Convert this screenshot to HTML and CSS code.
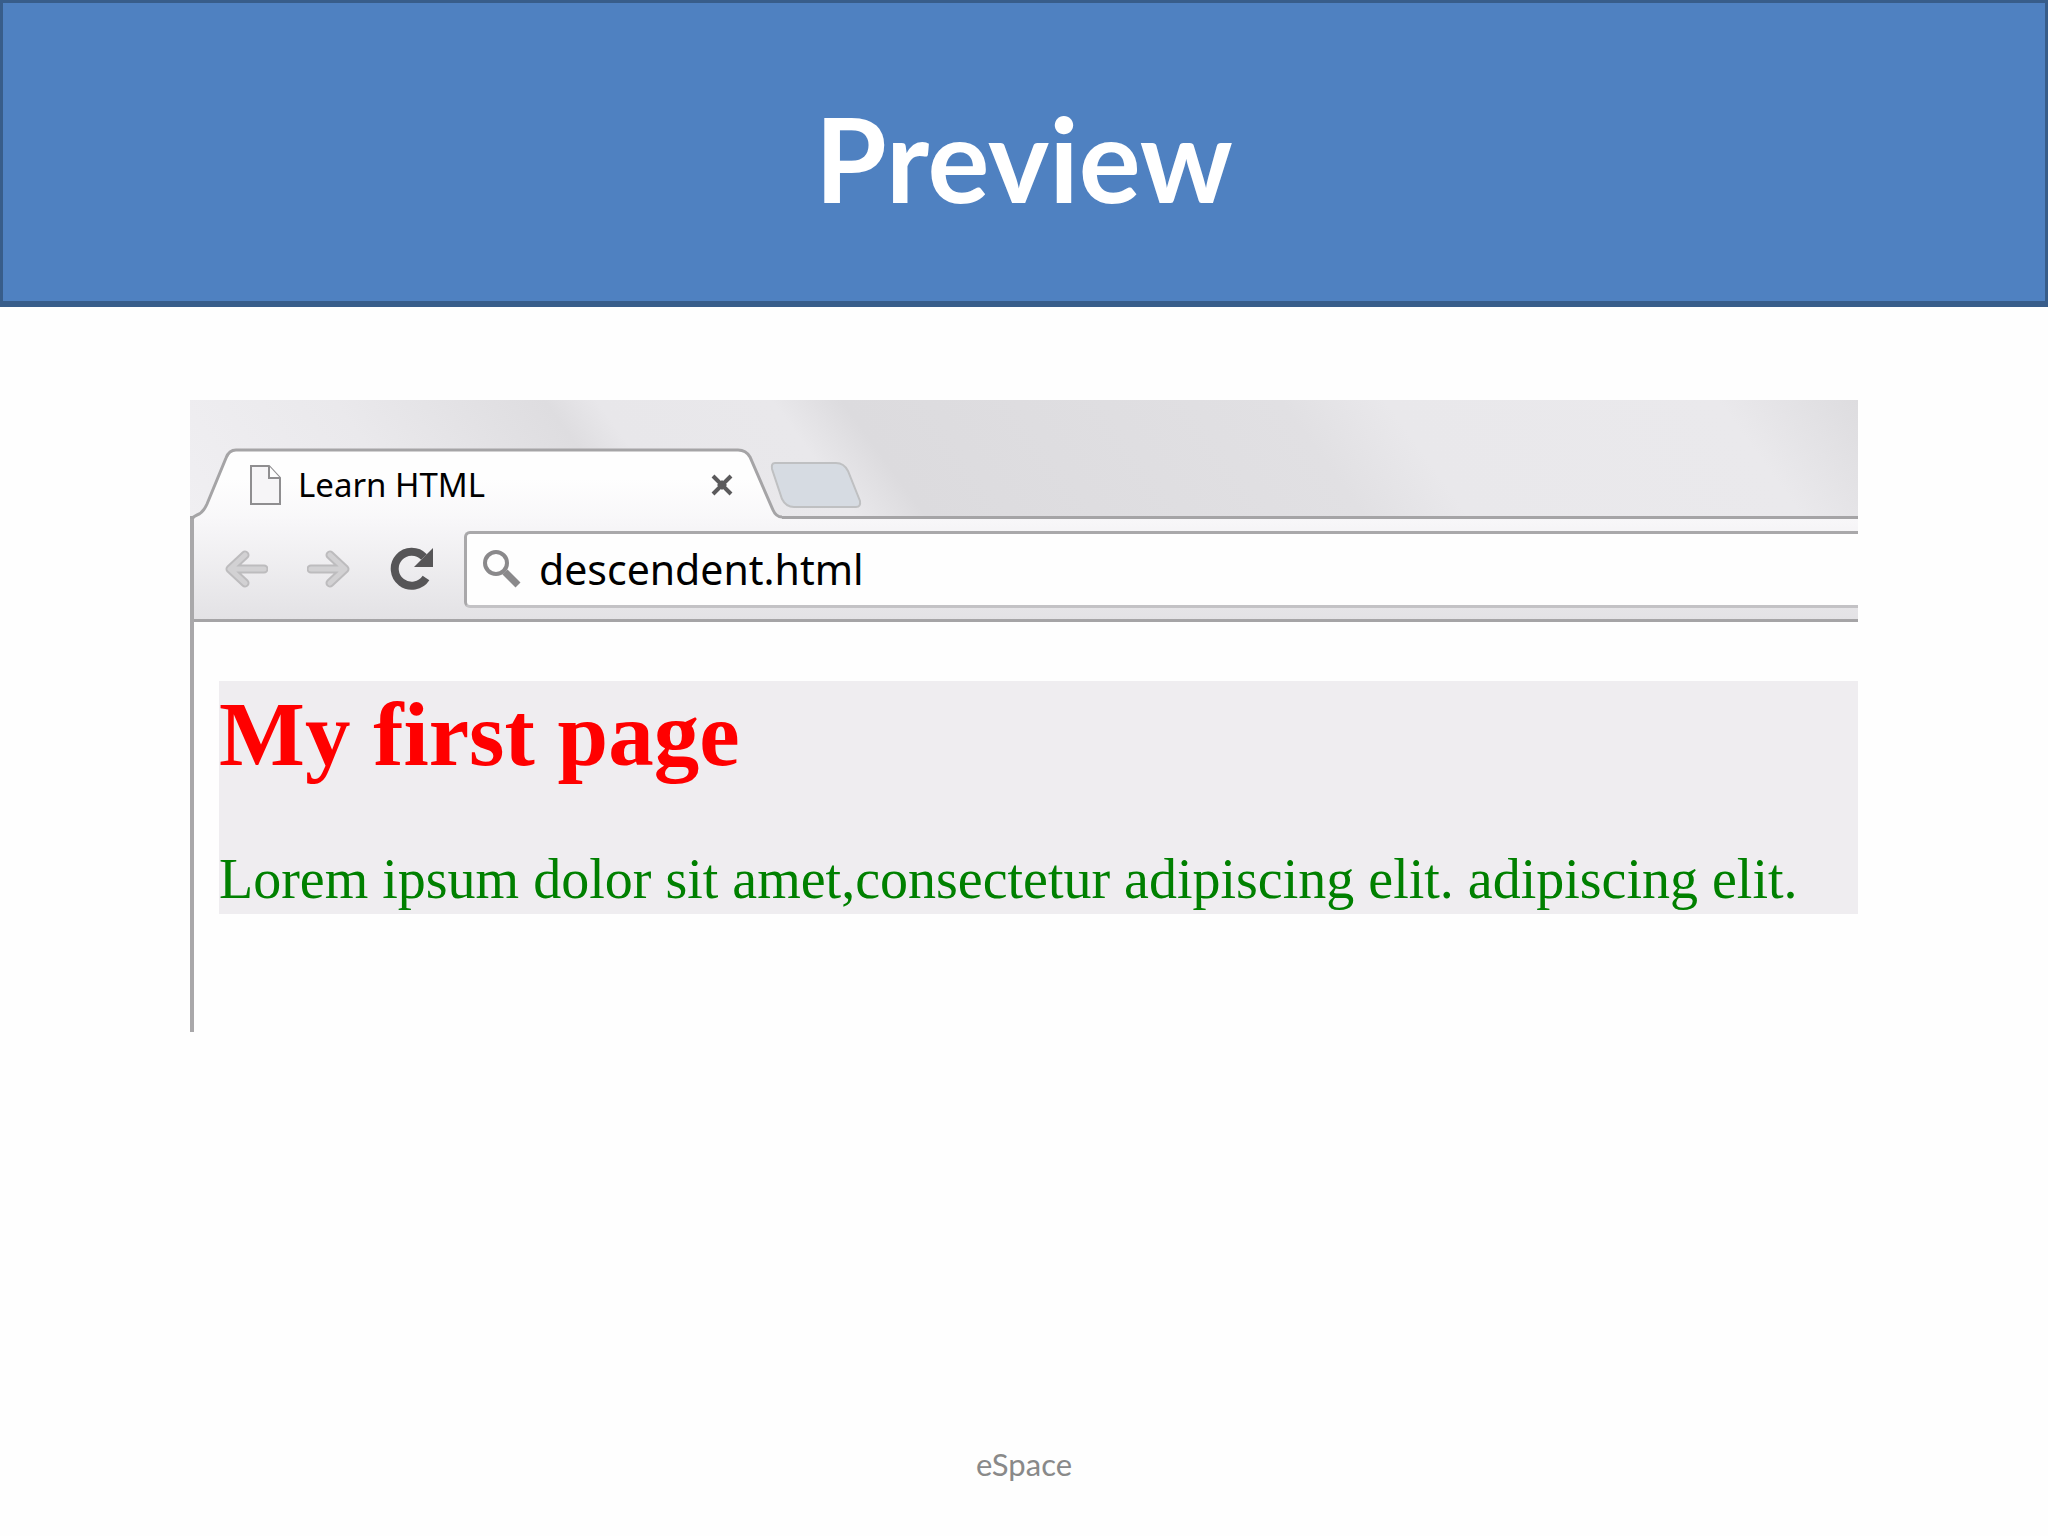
FILE: index.html
```html
<!DOCTYPE html>
<html lang="en">
<head>
    <meta charset="UTF-8">
    <meta name="viewport" content="width=device-width, initial-scale=1.0">
    <title>Preview</title>
    <link rel="stylesheet" href="styles.css">
</head>
<body>
    <header class="header">
        <h1>Preview</h1>
    </header>

    <main class="content">
        <div class="browser">
            <div class="tab-strip">
                <div class="tab">
                    <svg class="tab-shape" viewBox="0 0 592 71" aria-hidden="true">
                        <defs>
                            <linearGradient id="tabFill" x1="0" y1="0" x2="0" y2="1">
                                <stop offset="0.4" stop-color="#fefefe"/>
                                <stop offset="1" stop-color="#f8f7f9"/>
                            </linearGradient>
                        </defs>
                        <path d="M1 74 Q2 69 7 67 Q13 65 17 56 L36 10 Q39 2 46 2 H548 Q556 2 560 9 L583 62 Q586 69 592 69 V74 Z" fill="url(#tabFill)"/>
                        <path d="M1 74 Q2 69 7 67 Q13 65 17 56 L36 10 Q39 2 46 2 H548 Q556 2 560 9 L583 62 Q586 69 592 69" fill="none" stroke="#a5a4a6" stroke-width="3"/>
                    </svg>
                    <svg class="file-icon" viewBox="0 0 32 40" aria-hidden="true">
                        <path d="M1 1 H19 L30 13 V39 H1 Z" fill="#f6f5f7" stroke="#8f8e90" stroke-width="2"/>
                        <path d="M19 1 V13 H30" fill="#fefefe" stroke="#8f8e90" stroke-width="2"/>
                    </svg>
                    <span class="tab-title">Learn HTML</span>
                    <button class="tab-close" aria-label="Close tab">
                        <svg viewBox="0 0 22 22" aria-hidden="true">
                            <path d="M2 2 L20 20 M20 2 L2 20" stroke="#5b5a5c" stroke-width="4"/>
                            <path d="M11 6 L16 11 L11 16 L6 11 Z" fill="#5b5a5c"/>
                        </svg>
                    </button>
                </div>
                <button class="new-tab" aria-label="New tab">
                    <svg viewBox="0 0 92 48" aria-hidden="true">
                        <path d="M5 2 H66 Q74 2 78 10 L90 40 Q91 46 86 46 H24 Q16 46 12 38 L2 8 Q1 2 5 2 Z" fill="#d6dbe2" stroke="#bfc0c2" stroke-width="2"/>
                    </svg>
                </button>
            </div>

            <div class="window">
                <div class="toolbar">
                    <div class="nav">
                        <button class="nav-btn" aria-label="Back">
                            <svg viewBox="0 0 44 44" aria-hidden="true">
                                <path d="M40 22 H8 M21 8 L6 22 L21 36" fill="none" stroke="#bdbcbe" stroke-width="9" stroke-linejoin="round" stroke-linecap="round"/>
                                <path d="M40 22 H8 M21 8 L6 22 L21 36" fill="none" stroke="#d2d1d3" stroke-width="5" stroke-linejoin="round" stroke-linecap="round"/>
                            </svg>
                        </button>
                        <button class="nav-btn" aria-label="Forward">
                            <svg viewBox="0 0 44 44" aria-hidden="true">
                                <path d="M4 22 H36 M23 8 L38 22 L23 36" fill="none" stroke="#bdbcbe" stroke-width="9" stroke-linejoin="round" stroke-linecap="round"/>
                                <path d="M4 22 H36 M23 8 L38 22 L23 36" fill="none" stroke="#d2d1d3" stroke-width="5" stroke-linejoin="round" stroke-linecap="round"/>
                            </svg>
                        </button>
                        <button class="nav-btn" aria-label="Reload">
                            <svg viewBox="0 0 44 44" aria-hidden="true">
                                <path d="M36 31 A17 17 0 1 1 34 10" fill="none" stroke="#565557" stroke-width="8"/>
                                <path d="M43 1 V20 H24 Z" fill="#565557"/>
                            </svg>
                        </button>
                    </div>
                    <div class="address-bar">
                        <svg class="search-icon" viewBox="0 0 38 38" aria-hidden="true">
                            <circle cx="13" cy="13" r="11" fill="none" stroke="#8a898b" stroke-width="4"/>
                            <path d="M22 22 L35 35" stroke="#8a898b" stroke-width="7"/>
                        </svg>
                        <input type="text" class="address" aria-label="Address" value="descendent.html">
                    </div>
                </div>

                <div class="page">
                    <div class="box">
                        <h2>My first page</h2>
                        <p>Lorem ipsum dolor sit amet,consectetur adipiscing elit. adipiscing elit.</p>
                    </div>
                </div>
            </div>
        </div>
    </main>

    <footer class="footer">eSpace</footer>
</body>
</html>
```
FILE: styles.css
```css
* {
    margin: 0;
    padding: 0;
    box-sizing: border-box;
}

body {
    display: flex;
    flex-direction: column;
    min-height: 100vh;
    font-family: Lato, sans-serif;
    background: #fefefe;
}

button {
    display: block;
    background: none;
    border: none;
    cursor: pointer;
}

svg {
    display: block;
    width: 100%;
    height: 100%;
}

/* Slide title */
.header {
    padding: 95px 32px 81px;
    background: #4f81c1;
    border: 3px solid #385d8a;
    border-bottom-width: 6px;
    text-align: center;
}

.header h1 {
    font-size: 116px;
    font-weight: 700;
    line-height: 122px;
    color: #fff;
}

.content {
    flex: 1;
    padding: 93px 190px 0;
}

/* Browser window */
.tab-strip {
    display: flex;
    align-items: flex-end;
    height: 119px;
    background: linear-gradient(54deg, #f0eff2 0%, #eae9ec 13%, #dedde0 25%, #e8e7ea 28%, #e9e8eb 38%, #dcdbde 42%, #e1e0e3 67%, #e9e8eb 73%, #eae9ec 92%, #dddcdf 100%);
    border-bottom: 3px solid #a5a4a6;
}

.tab {
    position: relative;
    display: flex;
    align-items: center;
    width: 592px;
    height: 71px;
    margin-bottom: -3px;
    padding: 2px 49px 0 60px;
}

.tab-shape {
    position: absolute;
    top: 0;
    left: 0;
}

.file-icon {
    position: relative;
    width: 32px;
    height: 40px;
}

.tab-title {
    position: relative;
    flex: 1;
    margin-left: 16px;
    font-family: "Noto Sans", sans-serif;
    font-size: 33px;
    line-height: 40px;
    color: #000;
}

.tab-close {
    position: relative;
    width: 22px;
    height: 22px;
}

.new-tab {
    width: 92px;
    height: 48px;
    margin-bottom: 7px;
    margin-left: -12px;
}

.window {
    border-left: 4px solid #a9a8aa;
}

.toolbar {
    display: flex;
    align-items: center;
    gap: 30px;
    height: 103px;
    padding-left: 30px;
    background: linear-gradient(#f8f7f9, #e3e2e5);
    border-bottom: 3px solid #a5a4a6;
}

.nav {
    display: flex;
    gap: 39px;
}

.nav-btn {
    width: 44px;
    height: 44px;
}

.address-bar {
    display: flex;
    flex: 1;
    align-items: center;
    gap: 18px;
    height: 77px;
    padding-left: 16px;
    background: #fefefe;
    border: 3px solid #a9a8aa;
    border-right: none;
    border-bottom-color: #c3c2c5;
    border-radius: 6px 0 0 6px;
}

.search-icon {
    flex: none;
    width: 38px;
    height: 38px;
}

.address {
    flex: 1;
    min-width: 0;
    font-family: "Noto Sans", sans-serif;
    font-size: 41px;
    color: #000;
    background: none;
    border: none;
    outline: none;
}

/* Rendered page */
.page {
    min-height: 410px;
    padding: 59px 0 0 25px;
}

.box {
    padding-top: 2px;
    background: #efedf0;
    font-family: "Liberation Serif", serif;
}

.box h2 {
    margin-bottom: 58px;
    font-size: 91px;
    line-height: 104px;
    color: #f00;
}

.box p {
    font-size: 56px;
    line-height: 69px;
    color: #008000;
}

.footer {
    padding-bottom: 52px;
    font-size: 31px;
    line-height: 40px;
    text-align: center;
    color: #898989;
}
```
